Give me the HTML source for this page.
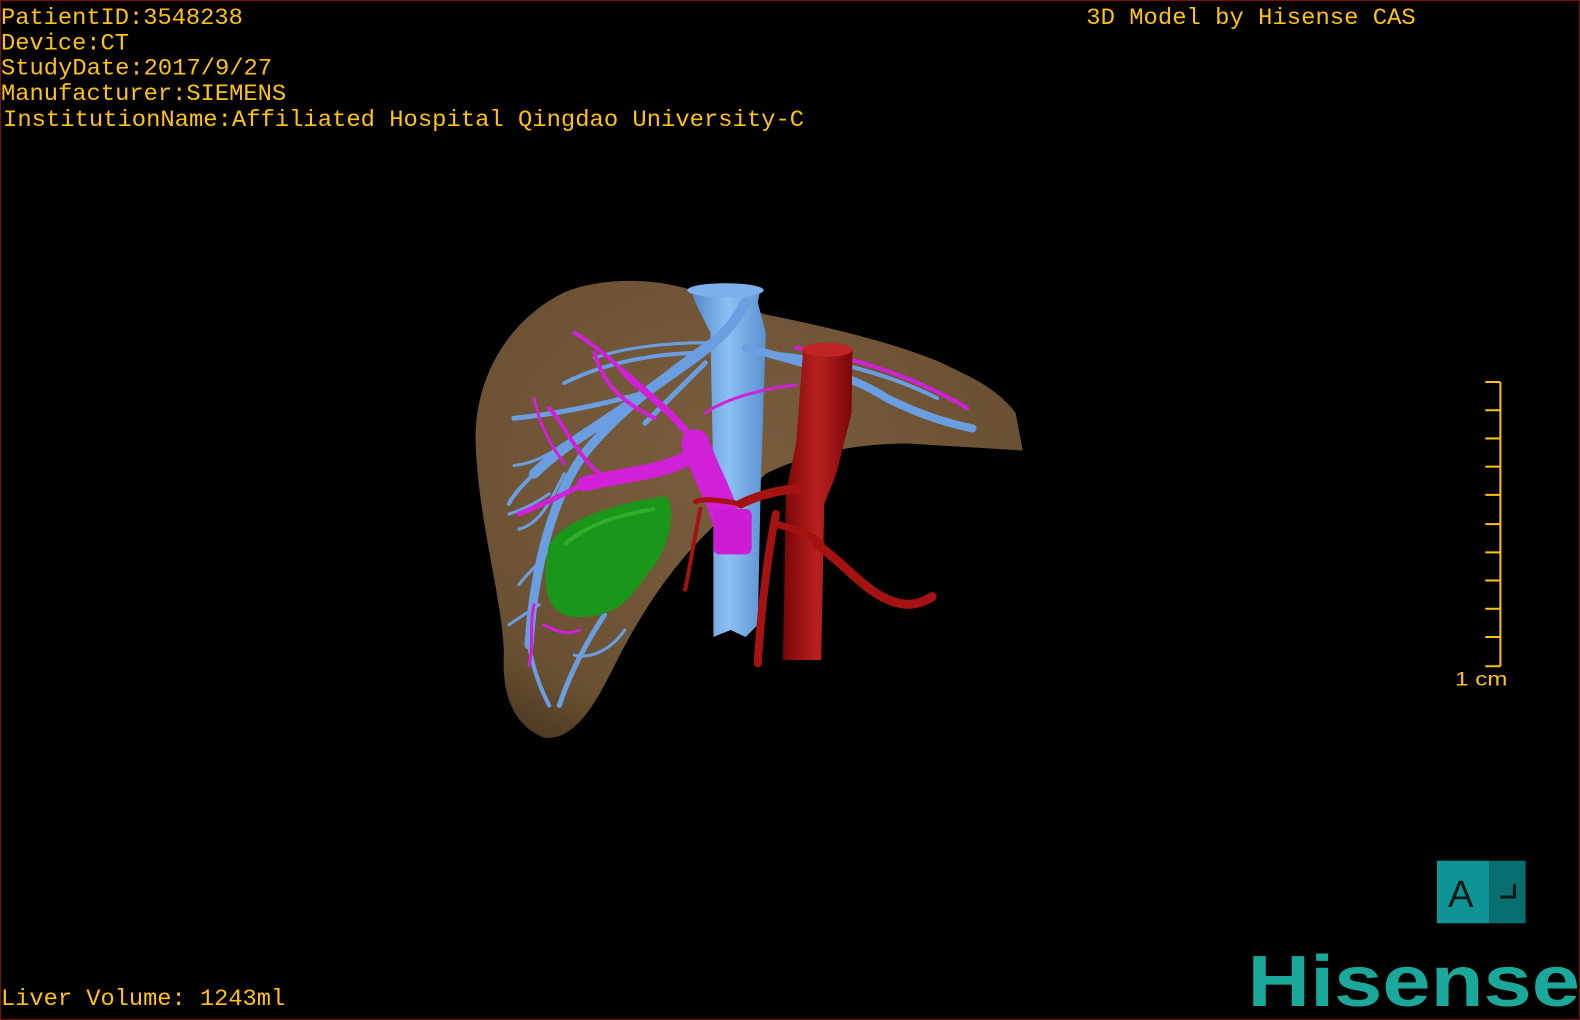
<!DOCTYPE html>
<html><head><meta charset="utf-8"><style>
html,body{margin:0;padding:0;background:#000;}
svg{display:block}
</style></head><body>
<svg width="1580" height="1020" viewBox="0 0 1568 1012" preserveAspectRatio="none" xmlns="http://www.w3.org/2000/svg">
<defs>
<radialGradient id="lv" cx="0.45" cy="0.4" r="0.7"><stop offset="0" stop-color="#7a5e3e"/><stop offset="0.8" stop-color="#6a5032"/><stop offset="1" stop-color="#4a3820"/></radialGradient>
<linearGradient id="ivc" x1="0" x2="1"><stop offset="0" stop-color="#4f86c8"/><stop offset="0.5" stop-color="#8cc0f4"/><stop offset="1" stop-color="#5a90d0"/></linearGradient>
<linearGradient id="ao" x1="0" x2="1"><stop offset="0" stop-color="#7a0606"/><stop offset="0.5" stop-color="#b82020"/><stop offset="1" stop-color="#7a0606"/></linearGradient>
</defs>
<rect x="0" y="0" width="1568" height="1012" fill="#000" stroke="#7a1010" stroke-width="2"/>
<path d="M560 290 C500 320 470 380 472 440 C475 520 500 600 500 650 C498 690 510 720 540 732 C570 735 590 700 610 660 C640 600 670 560 700 530 L760 470 C800 450 850 440 900 440 L1015 447 L1008 410 C990 385 960 372 930 358 C880 338 820 324 760 312 C720 300 690 285 650 280 C610 276 580 282 560 290 Z" fill="url(#lv)"/>
<!-- IVC -->
<path d="M685 285 L755 285 L752 300 L760 330 L755 480 L752 620 L740 632 L725 625 L708 632 L708 480 L705 330 L690 300 Z" fill="url(#ivc)"/>
<ellipse cx="720" cy="288" rx="38" ry="7" fill="#7cb0ea"/>
<!-- blue hepatic veins -->
<g stroke="#6a9ee0" stroke-linecap="round" fill="none">
<path d="M740 300 C720 340 680 360 640 390 C600 420 560 440 530 470" stroke-width="10"/>
<path d="M720 330 C680 360 620 400 580 450 C550 490 530 560 525 640" stroke-width="9"/>
<path d="M640 390 C600 400 560 410 510 415" stroke-width="5"/>
<path d="M700 350 C650 350 600 360 560 380" stroke-width="4"/>
<path d="M530 470 C520 480 510 490 505 500" stroke-width="4"/>
<path d="M560 440 C540 455 525 460 510 462" stroke-width="3"/>
<path d="M525 640 C530 670 540 690 545 700" stroke-width="4"/>
<path d="M600 610 C580 640 565 670 555 700" stroke-width="5"/>
<path d="M570 650 C590 655 610 640 620 625" stroke-width="3"/>
<path d="M740 345 C800 360 850 375 880 395 C910 410 940 420 965 425" stroke-width="8"/>
<path d="M760 350 C820 355 880 370 930 395" stroke-width="4"/>
<path d="M700 340 C660 340 620 345 590 355" stroke-width="3"/>
<path d="M700 360 C680 380 660 400 640 420" stroke-width="5"/>
<path d="M560 470 C545 500 535 520 515 525" stroke-width="3"/>
<path d="M550 540 C535 560 522 570 515 580" stroke-width="3"/>
<path d="M545 490 C530 500 520 505 505 510" stroke-width="3"/>
<path d="M535 600 C520 610 512 615 505 620" stroke-width="3"/>
</g>
<!-- magenta portal -->
<g stroke="#d020d8" stroke-linecap="round" fill="none">
<path d="M725 535 C720 500 700 470 690 440" stroke-width="28"/>
<path d="M690 450 C660 470 620 470 580 480" stroke-width="15"/>
<path d="M690 440 C670 410 640 390 620 370" stroke-width="7"/>
<path d="M620 370 C600 350 585 340 570 330" stroke-width="4"/>
<path d="M650 415 C620 400 600 385 590 350" stroke-width="4"/>
<path d="M580 480 C560 490 540 500 515 510" stroke-width="5"/>
<path d="M600 475 C570 450 560 420 545 405" stroke-width="4"/>
<path d="M700 410 C720 395 760 385 790 382" stroke-width="3"/>
<path d="M790 345 C850 355 910 375 960 405" stroke-width="4"/>
<path d="M530 600 C525 620 530 640 525 660" stroke-width="3"/>
<path d="M540 620 C555 628 565 630 575 625" stroke-width="3"/>
<path d="M560 460 C545 440 535 420 530 395" stroke-width="3"/>
</g>
<rect x="708" y="505" width="38" height="45" rx="6" fill="#cc1cd4"/>
<!-- gallbladder -->
<path d="M545 540 C560 515 610 500 660 492 C672 500 665 540 650 560 C630 585 620 610 580 612 C545 615 535 590 545 540Z" fill="#1a961a"/>
<path d="M560 540 C590 515 630 508 650 505" stroke="#3cc03c" stroke-width="4" fill="none" opacity="0.6"/>
<!-- aorta -->
<path d="M797 348 L846 348 L845 410 L830 470 L818 500 L815 655 L777 655 L780 490 L790 440 Z" fill="url(#ao)"/>
<ellipse cx="821" cy="347" rx="25" ry="7" fill="#c02424"/>
<g stroke="#a51212" stroke-linecap="round" fill="none">
<path d="M810 540 C840 560 860 590 890 598 C905 602 915 598 925 592" stroke-width="9"/>
<path d="M795 485 C770 485 745 495 735 500" stroke-width="9"/>
<path d="M770 510 C760 560 755 610 752 658" stroke-width="8"/>
<path d="M735 500 C710 495 695 495 690 498" stroke-width="5"/>
<path d="M695 505 C690 530 685 560 680 585" stroke-width="4"/>
<path d="M770 520 C790 525 805 530 815 540" stroke-width="7"/>
</g>
<!-- text -->
<g font-family="'Liberation Mono', monospace" fill="#ffc20e" font-size="23">
<text x="1" y="24" textLength="240" lengthAdjust="spacingAndGlyphs">PatientID:3548238</text>
<text x="1" y="49" textLength="127" lengthAdjust="spacingAndGlyphs">Device:CT</text>
<text x="1" y="74" textLength="269" lengthAdjust="spacingAndGlyphs">StudyDate:2017/9/27</text>
<text x="1" y="99" textLength="283" lengthAdjust="spacingAndGlyphs">Manufacturer:SIEMENS</text>
<text x="3" y="125" textLength="795" lengthAdjust="spacingAndGlyphs">InstitutionName:Affiliated Hospital Qingdao University-C</text>
<text x="1078" y="24" textLength="327" lengthAdjust="spacingAndGlyphs">3D Model by Hisense CAS</text>
<text x="1" y="997" textLength="282" lengthAdjust="spacingAndGlyphs">Liver Volume: 1243ml</text>
</g>
<!-- scale -->
<g stroke="#ffc20e" stroke-width="2" fill="none">
<path d="M1489 379 V661"/>
<path d="M1474 379H1489M1474 407H1489M1474 435H1489M1474 463H1489M1474 491H1489M1474 520H1489M1474 548H1489M1474 576H1489M1474 604H1489M1474 632H1489M1474 661H1489"/>
</g>
<text x="1444" y="680" font-family="'Liberation Sans',sans-serif" font-size="19" fill="#ffc20e" textLength="52" lengthAdjust="spacingAndGlyphs">1 cm</text>
<!-- A box -->
<rect x="1426" y="854" width="52" height="62" fill="#0e9494"/>
<rect x="1478" y="854" width="36" height="62" fill="#086e70"/>
<text x="1437" y="900" font-family="'Liberation Sans',sans-serif" font-size="38" fill="#061818">A</text>
<path d="M1489 890H1503V877" stroke="#061818" stroke-width="3" fill="none"/>
<text x="1238" y="998" font-family="'Liberation Sans',sans-serif" font-weight="bold" font-size="72" fill="#1aa89a" textLength="330" lengthAdjust="spacingAndGlyphs">Hisense</text>
</svg>
</body></html>
